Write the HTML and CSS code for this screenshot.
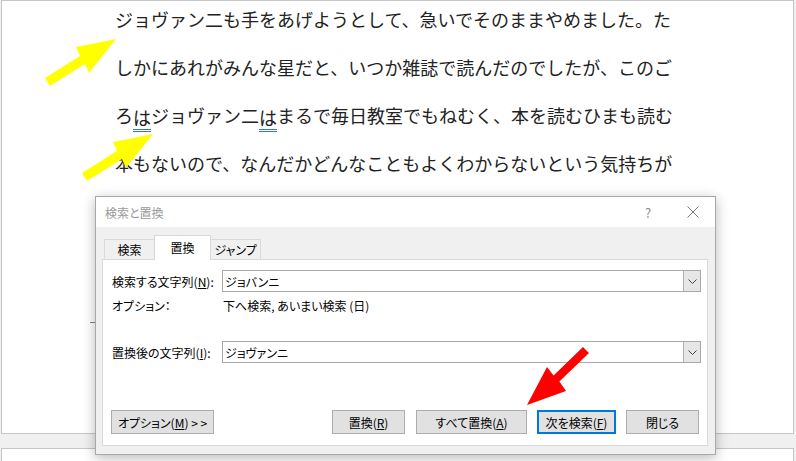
FILE: index.html
```
<!DOCTYPE html>
<html lang="ja">
<head>
<meta charset="utf-8">
<title>検索と置換</title>
<link rel="stylesheet" href="styles.css">
</head>
<body>
<div class="page">
  <div class="doc">
    <div class="line">ジョヴァン二も手をあげようとして、急いでそのままやめました。た</div>
    <div class="line">しかにあれがみんな星だと、いつか雑誌で読んだのでしたが、このご</div>
    <div class="line">ろ<span class="dbl">は</span>ジョヴァン二<span class="dbl">は</span>まるで毎日教室でもねむく、本を読むひまも読む</div>
    <div class="line">本もないので、なんだかどんなこともよくわからないという気持ちが</div>
  </div>
  <div class="tick"></div>
</div>
<div class="page page2"></div>

<div class="dialog">
  <div class="titlebar">
    <span class="title">検索と置換</span>
    <span class="help">?</span>
    <span class="close"><svg width="12" height="12" viewBox="0 0 12 12"><path d="M0.5 0.5L11.5 11.5M11.5 0.5L0.5 11.5" stroke="#7a7a7a" stroke-width="1" fill="none"/></svg></span>
  </div>
  <div class="dbody">
    <div class="tabs">
      <div class="tab t1">検索</div>
      <div class="tab active">置換</div>
      <div class="tab t3">ジャンプ</div>
    </div>
    <div class="panel">
      <div class="row">
        <span class="lbl">検索する文字列(<u>N</u>):</span>
        <div class="combo"><span class="val">ジョバンニ</span><span class="drop"><svg width="9" height="5" viewBox="0 0 9 5"><path d="M0.5 0.5L4.5 4.5L8.5 0.5" fill="none" stroke="#444" stroke-width="1"/></svg></span></div>
      </div>
      <div class="row opt">
        <span class="lbl">オプション：</span>
        <span class="optval">下へ検索, あいまい検索 (日)</span>
      </div>
      <div class="row r3">
        <span class="lbl">置換後の文字列(<u>I</u>):</span>
        <div class="combo"><span class="val">ジョヴァンニ</span><span class="drop"><svg width="9" height="5" viewBox="0 0 9 5"><path d="M0.5 0.5L4.5 4.5L8.5 0.5" fill="none" stroke="#444" stroke-width="1"/></svg></span></div>
      </div>
      <div class="buttons">
        <button class="btn b-opt">オプション(<u>M</u>) &gt; &gt;</button>
        <div class="spacer"></div>
        <button class="btn b-rep">置換(<u>R</u>)</button>
        <button class="btn b-all">すべて置換(<u>A</u>)</button>
        <button class="btn b-next">次を検索(<u>F</u>)</button>
        <button class="btn b-close">閉じる</button>
      </div>
    </div>
  </div>
</div>

<svg class="overlay" width="796" height="461" viewBox="0 0 796 461">
  <polygon points="45,78 80,56 76,47 116,39 89,73 85,64 50,86" fill="#ffff00"/>
  <polygon points="82,173 117,151 113,142 153,134 126,168 122,159 87,181" fill="#ffff00"/>
  <polygon points="583,347 553.6,375.4 547,367 527,405 566,391 559.4,381.6 589,353" fill="#ff0000"/>
</svg>
</body>
</html>
```

FILE: styles.css
```
html, body {
  margin: 0;
  padding: 0;
}
body {
  width: 796px;
  height: 461px;
  overflow: hidden;
  position: relative;
  background: #f0f0f0;
  font-family: "Noto Sans CJK JP", "Noto Sans", sans-serif;
}
.page {
  margin-left: 1px;
  width: 793px;
  height: 434px;
  box-sizing: border-box;
  background: #fff;
  border: 1px solid #c6c6c6;
  position: relative;
}
.page2 {
  margin-top: 14px;
  height: 13px;
  border-bottom: none;
}
.doc {
  margin-top: -6px;
  padding-left: 113px;
  font-size: 18px;
  line-height: 48px;
  color: #222;
}
.line {
  white-space: nowrap;
}
.dbl {
  border-bottom: 3px double #3a6fd6;
  display: inline-block;
  line-height: 24px;
  vertical-align: -2px;
}
.tick {
  position: absolute;
  left: 88px;
  top: 321px;
  width: 7px;
  height: 1px;
  background: #888;
}

/* dialog */
.dialog {
  position: absolute;
  left: 95px;
  top: 196px;
  width: 621px;
  height: 259px;
  box-sizing: border-box;
  border: 1px solid #a8a8a8;
  background: #f0f0f0;
  box-shadow: 0 3px 12px rgba(0, 0, 0, 0.28);
  display: flex;
  flex-direction: column;
  font-size: 12px;
  color: #000;
  font-feature-settings: "palt";
}
.titlebar {
  height: 30px;
  background: #fff;
  display: flex;
  align-items: center;
  padding-left: 9px;
}
.title {
  color: #9a9a9a;
  font-size: 12px;
  flex: 1;
}
.help {
  color: #8a8a8a;
  font-size: 13px;
  width: 12px;
  text-align: center;
  margin-right: 33px;
}
.close {
  width: 12px;
  height: 12px;
  margin-right: 16px;
  display: flex;
}
.dbody {
  flex: 1;
  display: flex;
  flex-direction: column;
  padding: 0 7px 8px 6px;
}
.tabs {
  height: 32px;
  display: flex;
  align-items: flex-end;
  padding-left: 2px;
  position: relative;
  z-index: 2;
}
.tab {
  box-sizing: border-box;
  height: 20px;
  border: 1px solid #d9d9d9;
  border-bottom: none;
  display: flex;
  align-items: center;
  justify-content: center;
  background: #f0f0f0;
}
.t1 {
  width: 50px;
  border-right: none;
}
.t3 {
  width: 50px;
  border-left: none;
}
.tab.active {
  width: 57px;
  height: 25px;
  background: #fff;
  margin-bottom: -1px;
  padding-bottom: 2px;
}
.panel {
  flex: 1;
  background: #fff;
  border: 1px solid #d9d9d9;
  padding: 10px 6px 11px 8px;
  display: flex;
  flex-direction: column;
}
.row {
  display: flex;
  align-items: center;
  height: 22px;
}
.lbl {
  width: 111px;
  padding-left: 1px;
  box-sizing: border-box;
  white-space: nowrap;
}
.opt {
  margin-top: 2px;
}
.optval {
  padding-left: 1px;
}
.r3 {
  margin-top: 25px;
}
.combo {
  flex: 1;
  height: 22px;
  box-sizing: border-box;
  border: 1px solid #a9a9a9;
  display: flex;
  align-items: center;
  background: #fff;
}
.val {
  flex: 1;
  padding-left: 2px;
}
.drop {
  width: 17px;
  height: 20px;
  box-sizing: border-box;
  border-left: 1px solid #b0b0b0;
  background: #e6e6e6;
  display: flex;
  align-items: center;
  justify-content: center;
}
.buttons {
  margin-top: 47px;
  display: flex;
  height: 24px;
  margin-right: 2px;
}
.spacer {
  flex: 1;
}
.btn {
  font-family: inherit;
  font-size: 12px;
  font-feature-settings: "palt";
  color: #000;
  height: 24px;
  padding: 0;
  box-sizing: border-box;
  background: #e1e1e1;
  border: 1px solid #adadad;
  margin: 0;
}
.b-opt { width: 103px; }
.b-rep { width: 73px; }
.b-all { width: 111px; margin-left: 11px; }
.b-next {
  width: 79px;
  margin-left: 10px;
  border: 2px solid #0078d7;
}
.b-close { width: 73px; margin-left: 10px; }
.overlay {
  position: absolute;
  left: 0;
  top: 0;
  z-index: 10;
  pointer-events: none;
}
```
